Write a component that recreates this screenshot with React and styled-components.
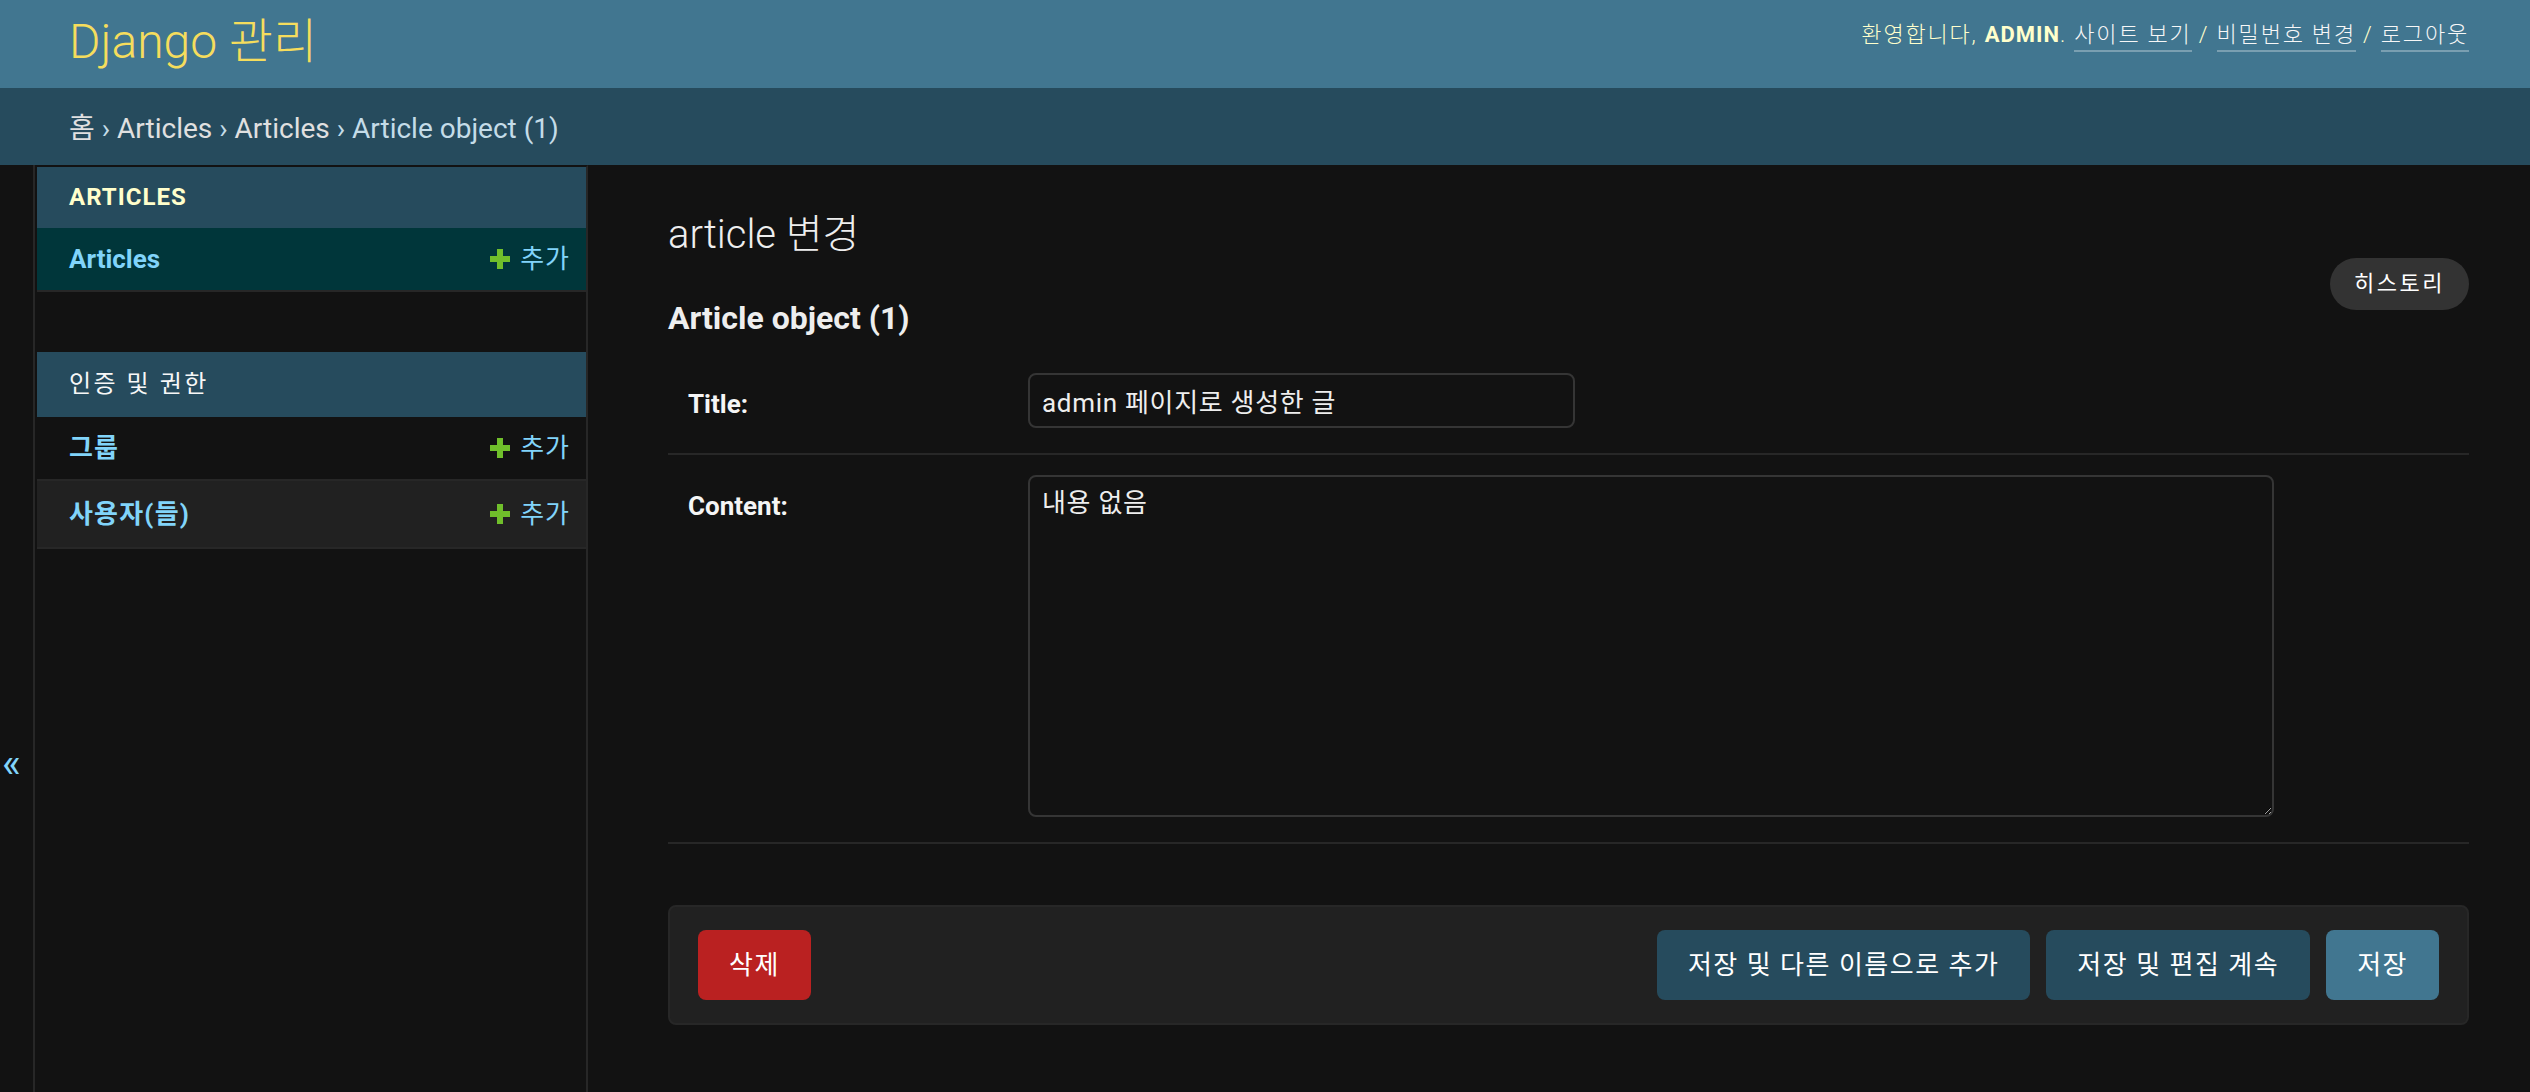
import React from 'react'
import styled, { createGlobalStyle } from 'styled-components'

const GlobalStyle = createGlobalStyle`
  html, body {
    margin: 0;
    padding: 0;
    background: #121212;
  }
  body {
    font-family: Roboto, "Noto Sans CJK KR", sans-serif;
    color: #eeeeee;
    font-size: 28px;
  }
  * {
    box-sizing: border-box;
  }
`;

const PlusIcon = () => (
  <svg width="20" height="20" viewBox="0 0 20 20">
    <path d="M7 0h6v7h7v6h-7v7H7v-7H0V7h7z" fill="#70bf2b" />
  </svg>
)

const App = () => {
  return (
    <>
      <GlobalStyle />
      <Header>
        <Branding>Django 관리</Branding>
        <UserTools>
          환영합니다, <strong>admin</strong>.{' '}
          <ToolLink>사이트 보기</ToolLink> / <ToolLink>비밀번호 변경</ToolLink> / <ToolLink>로그아웃</ToolLink>
        </UserTools>
      </Header>
      <Breadcrumbs>
        <Crumb>홈</Crumb> › <Crumb>Articles</Crumb> › <Crumb>Articles</Crumb> › Article object (1)
      </Breadcrumbs>
      <Main>
        <Toggle>«</Toggle>
        <Sidebar>
          <Module>
            <Caption current>Articles</Caption>
            <ModelRow bg="#00363a">
              <ModelName>Articles</ModelName>
              <AddLink><PlusIcon />추가</AddLink>
            </ModelRow>
          </Module>
          <Module>
            <Caption korean>인증 및 권한</Caption>
            <ModelRow>
              <ModelName korean>그룹</ModelName>
              <AddLink><PlusIcon />추가</AddLink>
            </ModelRow>
            <ModelRow bg="#212121" tall>
              <ModelName korean>사용자(들)</ModelName>
              <AddLink><PlusIcon />추가</AddLink>
            </ModelRow>
          </Module>
        </Sidebar>
        <Content>
          <TitleBlock>
            <div>
              <PageTitle>article 변경</PageTitle>
              <ObjectTitle>Article object (1)</ObjectTitle>
            </div>
            <ObjectTools>
              <HistoryButton>히스토리</HistoryButton>
            </ObjectTools>
          </TitleBlock>
          <Fieldset>
            <FormRow>
              <Label>Title:</Label>
              <TextInput defaultValue="admin 페이지로 생성한 글" />
            </FormRow>
            <FormRow>
              <Label>Content:</Label>
              <TextArea defaultValue="내용 없음" />
            </FormRow>
          </Fieldset>
          <SubmitRow>
            <DeleteButton>삭제</DeleteButton>
            <Button>저장 및 다른 이름으로 추가</Button>
            <Button>저장 및 편집 계속</Button>
            <Button primary>저장</Button>
          </SubmitRow>
        </Content>
      </Main>
    </>
  )
}

export default App

const Header = styled.div`
  display: flex;
  justify-content: space-between;
  align-items: center;
  height: 88px;
  padding: 0 61px 0 69px;
  background: #417690;
`;

const Branding = styled.h1`
  margin: -5px 0 0;
  font-size: 48px;
  line-height: 48px;
  font-weight: 300;
  color: #f5dd5d;
`;

const UserTools = styled.div`
  margin-top: -18px;
  font-size: 22px;
  line-height: 30px;
  font-weight: 300;
  letter-spacing: 1.8px;
  text-transform: uppercase;
  color: #ffffcc;

  strong {
    font-weight: 700;
    letter-spacing: 1px;
  }
`;

const ToolLink = styled.span`
  color: #f7f7f7;
  border-bottom: 2px solid rgba(255, 255, 255, 0.3);
  padding-bottom: 3px;
`;

const Breadcrumbs = styled.div`
  padding: 22px 69px 18px;
  font-size: 28px;
  line-height: 37px;
  background: #264b5d;
  color: #c4dce8;
`;

const Crumb = styled.span`
  color: #e0e0e0;
`;

const Main = styled.div`
  display: flex;
  min-height: 927px;
`;

const Toggle = styled.div`
  flex: 0 0 35px;
  padding: 575px 0 0 2px;
  border-right: 2px solid #272727;
  font-size: 40px;
  line-height: 48px;
  color: #81d4fa;
`;

const Sidebar = styled.div`
  flex: 0 0 553px;
  padding-left: 2px;
  border-top: 2px solid transparent;
  border-right: 2px solid #272727;
`;

const Module = styled.div`
  margin-bottom: 60px;
`;

const Caption = styled.div`
  padding: ${p => (p.korean ? '18px 32px' : '16px 32px')};
  background: #264b5d;
  font-size: 24px;
  line-height: 29px;
  letter-spacing: ${p => (p.korean ? '2.5px' : '1px')};
  text-transform: uppercase;
  font-weight: ${p => (p.current ? 700 : 400)};
  color: ${p => (p.current ? '#ffffcc' : '#f7f7f7')};
`;

const ModelRow = styled.div`
  display: flex;
  justify-content: space-between;
  align-items: center;
  padding: ${p => (p.tall ? '18px 16px 18px 32px' : '16px 16px 16px 32px')};
  background: ${p => p.bg || '#121212'};
  border-bottom: 2px solid #272727;
`;

const ModelName = styled.span`
  font-size: 26px;
  line-height: 30px;
  font-weight: 700;
  letter-spacing: ${p => (p.korean ? '1.2px' : '0')};
  color: #81d4fa;
`;

const AddLink = styled.span`
  display: inline-flex;
  align-items: center;
  gap: 10px;
  font-size: 26px;
  line-height: 30px;
  letter-spacing: 1px;
  color: #81d4fa;
`;

const Content = styled.div`
  flex: 1;
  min-width: 0;
  padding: 46px 61px 40px 80px;
`;

const TitleBlock = styled.div`
  display: flex;
  justify-content: space-between;
  align-items: flex-start;
`;

const PageTitle = styled.h1`
  margin: 0 0 39px;
  font-size: 40px;
  line-height: 48px;
  font-weight: 300;
  color: #eeeeee;
`;

const ObjectTitle = styled.h2`
  margin: 0 0 15px;
  font-size: 32px;
  line-height: 40px;
  font-weight: 700;
  color: #eeeeee;
`;

const ObjectTools = styled.div`
  padding-top: 47px;
`;

const HistoryButton = styled.span`
  display: block;
  padding: 6px 24px;
  border-radius: 30px;
  background: #333333;
  color: #ffffff;
  font-size: 22px;
  line-height: 40px;
  letter-spacing: 2.5px;
`;

const Fieldset = styled.div`
  margin-bottom: 61px;
`;

const FormRow = styled.div`
  display: flex;
  align-items: flex-start;
  padding: 20px 20px 25px;
  border-bottom: 2px solid #272727;
`;

const Label = styled.label`
  flex: 0 0 340px;
  padding-top: 18px;
  font-size: 26px;
  line-height: 26px;
  font-weight: 700;
  color: #f5f5f5;
`;

const fieldStyle = `
  display: block;
  margin: 0;
  padding: 10px 12px;
  border: 2px solid #353535;
  border-radius: 8px;
  background: #121212;
  color: #eeeeee;
  font-family: Roboto, "Noto Sans CJK KR", sans-serif;
  font-size: 26px;
  letter-spacing: 0.7px;
  color-scheme: dark;
  outline: none;
`;

const TextInput = styled.input`
  ${fieldStyle}
  width: 547px;
  height: 55px;
`;

const TextArea = styled.textarea`
  ${fieldStyle}
  width: 1246px;
  height: 342px;
  line-height: 32px;
  resize: both;
`;

const SubmitRow = styled.div`
  display: flex;
  gap: 16px;
  padding: 23px 28px;
  background: #212121;
  border: 2px solid #272727;
  border-radius: 8px;
`;

const Button = styled.span`
  display: block;
  height: 70px;
  padding: 0 31px;
  border-radius: 8px;
  background: ${p => (p.primary ? '#417690' : '#264b5d')};
  color: #ffffff;
  font-size: 26px;
  line-height: 70px;
  letter-spacing: 1.5px;
  white-space: nowrap;
`;

const DeleteButton = styled(Button)`
  margin-right: auto;
  background: #ba2121;
`;
